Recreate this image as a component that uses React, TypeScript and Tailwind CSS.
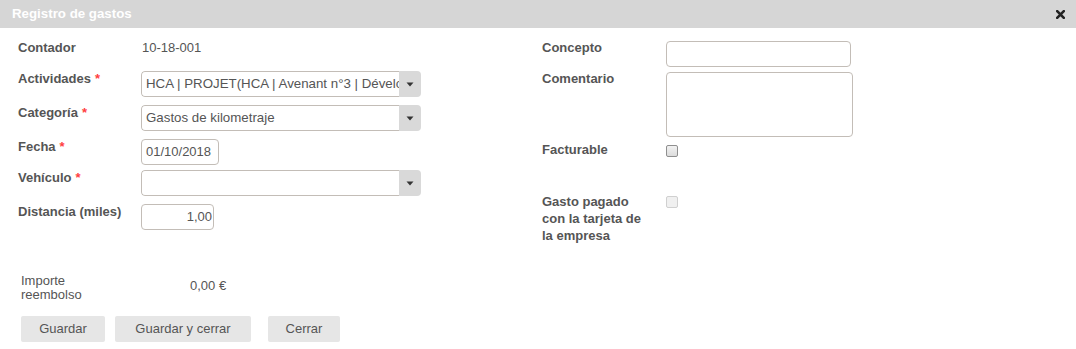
import React from 'react';

const Req: React.FC = () => <span className="text-[#ff4040] ml-[4px]">*</span>;

const Select: React.FC<{ value?: string; width?: string }> = ({ value = '', width = 'w-[280px]' }) => (
  <div className={`${width} h-[26px] flex rounded-[4px] overflow-hidden`}>
    <div className="flex-1 min-w-0 border border-r-0 border-[#c3bdb7] rounded-l-[4px] pl-[4px] flex items-center overflow-hidden whitespace-nowrap text-[13.3px]">
      {value}
    </div>
    <div className="w-[22px] bg-[#d9d9d9] flex items-center justify-center">
      <svg width="8" height="5" viewBox="0 0 8 5">
        <path d="M0.5 0.5 L7.5 0.5 L4 4.5 Z" fill="#333" />
      </svg>
    </div>
  </div>
);

const Checkbox: React.FC<{ disabled?: boolean }> = ({ disabled }) => (
  <div
    className={
      disabled
        ? 'w-[12px] h-[12px] mt-[3px] rounded-[2px] border border-[#d0d0d0] bg-[#f0f0f0]'
        : 'w-[12px] h-[12px] mt-[3px] rounded-[2px] border border-[#8f8f8f] bg-gradient-to-b from-[#f2f2f2] to-[#dcdcdc]'
    }
  />
);

export default function App() {
  return (
    <div className="w-[1076px] h-[349px] bg-white text-[13px] leading-[16px] text-[#555] font-['Liberation_Sans',Arial,sans-serif]">
      {/* title bar */}
      <div className="h-[28px] bg-[#d6d6d6] flex items-center justify-between pl-[12px] pr-[11px]">
        <span className="text-white font-bold text-[13.3px]">Registro de gastos</span>
        <svg width="9" height="9" viewBox="0 0 9 9">
          <path d="M1.2 1.2 L7.8 7.8 M7.8 1.2 L1.2 7.8" stroke="#222" strokeWidth="2.6" strokeLinecap="square" />
        </svg>
      </div>

      <div className="h-[246px] pt-[12px] flex">
        {/* left column */}
        <div className="w-[542px] pl-[18px] flex flex-col">
          <div className="h-[23px] flex">
            <div className="w-[123px] font-bold">Contador</div>
            <div className="pl-[1px]">10-18-001</div>
          </div>
          <div className="mt-[8px] flex">
            <div className="w-[123px] font-bold">Actividades<Req /></div>
            <Select value="HCA | PROJET(HCA | Avenant n°3 | Développement)" />
          </div>
          <div className="mt-[8px] flex">
            <div className="w-[123px] font-bold">Categoría<Req /></div>
            <Select value="Gastos de kilometraje" />
          </div>
          <div className="mt-[8px] flex">
            <div className="w-[123px] font-bold">Fecha<Req /></div>
            <div className="w-[78px] h-[26px] border border-[#c3bdb7] rounded-[4px] pl-[4px] flex items-center">01/10/2018</div>
          </div>
          <div className="mt-[5px] flex">
            <div className="w-[123px] font-bold">Vehículo<Req /></div>
            <Select />
          </div>
          <div className="mt-[8px] flex">
            <div className="w-[123px] font-bold">Distancia (miles)</div>
            <div className="w-[73px] h-[26px] border border-[#c3bdb7] rounded-[4px] pr-[1px] flex items-center justify-end">1,00</div>
          </div>
        </div>

        {/* right column */}
        <div className="flex-1 flex flex-col">
          <div className="flex">
            <div className="w-[124px] font-bold">Concepto</div>
            <div className="w-[185px] h-[26px] mt-[1px] border border-[#c3bdb7] rounded-[4px]" />
          </div>
          <div className="mt-[4px] flex">
            <div className="w-[124px] font-bold">Comentario</div>
            <div className="w-[187px] h-[65px] mt-[1px] border border-[#c3bdb7] rounded-[4px]" />
          </div>
          <div className="mt-[5px] flex">
            <div className="w-[124px] font-bold">Facturable</div>
            <Checkbox />
          </div>
          <div className="mt-[35px] flex">
            <div className="w-[124px]">
              <div className="w-[110px] font-bold leading-[17px]">Gasto pagado con la tarjeta de la empresa</div>
            </div>
            <Checkbox disabled />
          </div>
        </div>
      </div>

      {/* footer */}
      <div className="pl-[21px] flex h-[28px]">
        <div className="w-[169px]">
          <div className="w-[80px] leading-[14px]">Importe reembolso</div>
        </div>
        <div className="mt-[4px]">0,00 €</div>
      </div>
      <div className="mt-[14px] pl-[21px] flex">
        <button className="w-[84px] h-[26px] bg-[#e6e6e6] rounded-[2px] text-[#555]">Guardar</button>
        <button className="ml-[10px] w-[136px] h-[26px] bg-[#e6e6e6] rounded-[2px] text-[#555]">Guardar y cerrar</button>
        <button className="ml-[17px] w-[72px] h-[26px] bg-[#e6e6e6] rounded-[2px] text-[#555]">Cerrar</button>
      </div>
    </div>
  );
}
